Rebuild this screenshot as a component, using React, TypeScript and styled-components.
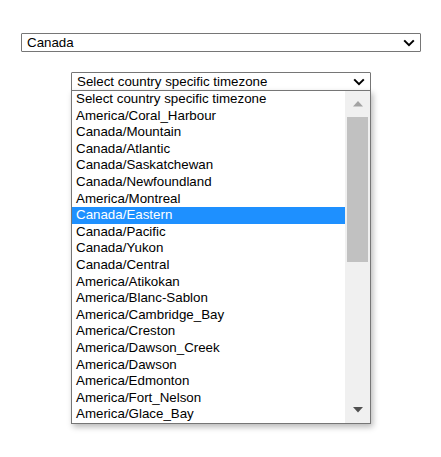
import React, { FC } from 'react'
import styled, { createGlobalStyle } from 'styled-components'

const GlobalStyle = createGlobalStyle`
  html, body {
    margin: 0;
    padding: 0;
    background: #fff;
  }
  body {
    min-height: 457px;
    font-family: 'Liberation Sans', Arial, sans-serif;
    font-size: 13.33px;
    color: #000;
  }
`

const zones = [
  'Select country specific timezone',
  'America/Coral_Harbour',
  'Canada/Mountain',
  'Canada/Atlantic',
  'Canada/Saskatchewan',
  'Canada/Newfoundland',
  'America/Montreal',
  'Canada/Eastern',
  'Canada/Pacific',
  'Canada/Yukon',
  'Canada/Central',
  'America/Atikokan',
  'America/Blanc-Sablon',
  'America/Cambridge_Bay',
  'America/Creston',
  'America/Dawson_Creek',
  'America/Dawson',
  'America/Edmonton',
  'America/Fort_Nelson',
  'America/Glace_Bay',
]

const Page = styled.div`
  display: flex;
  flex-direction: column;
  align-items: flex-start;
  padding-top: 33px;
  gap: 20px;
`

const Field = styled.div<{ $width: number; $indent: number }>`
  box-sizing: border-box;
  width: ${({ $width }) => $width}px;
  margin-left: ${({ $indent }) => $indent}px;
  height: 19px;
  border: 1px solid #767676;
  border-radius: 1px;
  background: #fff;
  display: flex;
  align-items: center;
  justify-content: space-between;
  padding: 0 5px 0 5px;
  line-height: 17px;
  white-space: nowrap;
`

const Dropdown = styled.div`
  display: flex;
  flex-direction: column;
  margin-left: 71px;
  width: 300px;
`

const Listbox = styled.div`
  box-sizing: border-box;
  width: 300px;
  height: 334px;
  margin-top: -1px;
  border: 1px solid #767676;
  background: #fff;
  display: flex;
  box-shadow: 2px 3px 6px rgba(0, 0, 0, 0.28);
`

const OptionList = styled.ul`
  list-style: none;
  margin: 0;
  padding: 0;
  flex: 1;
  overflow: hidden;
`

const OptionRow = styled.li<{ $selected?: boolean }>`
  height: 16.6px;
  line-height: 16.6px;
  padding-left: 4px;
  white-space: nowrap;
  background: ${({ $selected }) => ($selected ? '#1e90ff' : 'transparent')};
  color: ${({ $selected }) => ($selected ? '#fff' : '#000')};
`

const Scrollbar = styled.div`
  width: 25px;
  background: #f0f0f0;
  display: flex;
  flex-direction: column;
`

const ArrowButton = styled.div`
  height: 26px;
  display: flex;
  align-items: center;
  justify-content: center;
`

const Track = styled.div`
  flex: 1;
  padding: 0 2px;
`

const Thumb = styled.div`
  height: 145px;
  background: #c1c1c1;
`

const Chevron: FC = () => (
  <svg width='12' height='8' viewBox='0 0 12 8'>
    <path d='M1.2 1.4 L6 6.2 L10.8 1.4' fill='none' stroke='#000' strokeWidth='2' />
  </svg>
)

const Arrow: FC<{ down?: boolean; color: string }> = ({ down, color }) => (
  <svg width='10' height='6' viewBox='0 0 10 6'>
    <path d={down ? 'M0 0 H10 L5 5.5 Z' : 'M0 5.5 H10 L5 0 Z'} fill={color} />
  </svg>
)

const App: FC = () => (
  <>
    <GlobalStyle />
    <Page>
      <Field $width={400} $indent={21}>
        <span>Canada</span>
        <Chevron />
      </Field>
      <Dropdown>
        <Field $width={300} $indent={0}>
          <span>Select country specific timezone</span>
          <Chevron />
        </Field>
        <Listbox>
          <OptionList>
            {zones.map((zone) => (
              <OptionRow key={zone} $selected={zone === 'Canada/Eastern'}>
                {zone}
              </OptionRow>
            ))}
          </OptionList>
          <Scrollbar>
            <ArrowButton>
              <Arrow color='#a3a3a3' />
            </ArrowButton>
            <Track>
              <Thumb />
            </Track>
            <ArrowButton>
              <Arrow down color='#505050' />
            </ArrowButton>
          </Scrollbar>
        </Listbox>
      </Dropdown>
    </Page>
  </>
)

export default App
